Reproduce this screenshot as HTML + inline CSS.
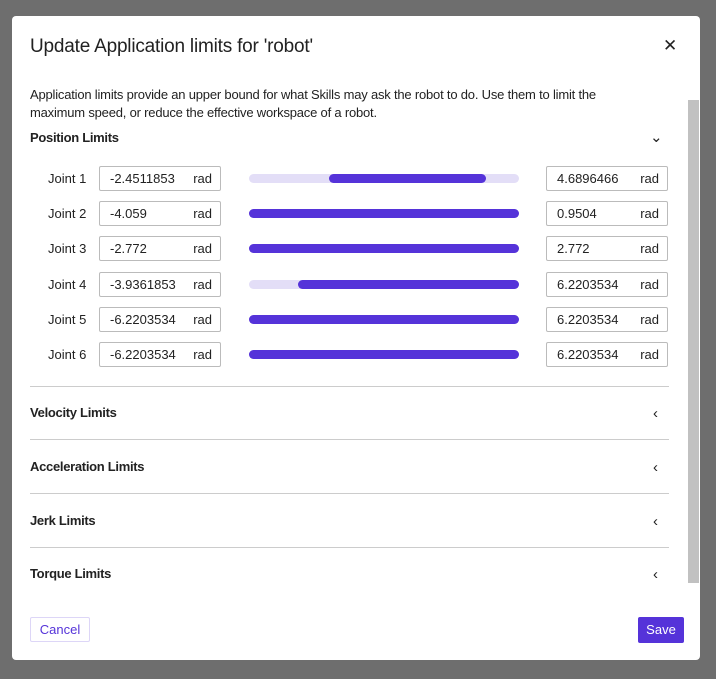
<!DOCTYPE html>
<html><head><style>
*{box-sizing:border-box;margin:0;padding:0}
body{width:716px;height:679px;background:#6e6e6e;font-family:"Liberation Sans",sans-serif;position:relative;overflow:hidden}
.modal{position:absolute;left:12px;top:16px;width:688px;height:644px;background:#fff;border-radius:4px}
.abs{position:absolute}
.title{left:18px;top:20px;font-size:19px;color:#222;letter-spacing:-0.2px}
.x{left:651px;top:20px;font-size:17px;color:#222}
.desc{left:18px;top:70px;font-size:13px;line-height:18px;color:#222;width:600px;letter-spacing:-0.2px}
.h{font-size:13px;font-weight:bold;color:#222;left:18px;letter-spacing:-0.3px}
.chev{left:641px;font-size:15px;color:#222}
.lbl{left:36px;font-size:13px;color:#222}
.inp{width:122px;height:25px;border:1px solid #bbb;border-radius:2px;font-size:13px;color:#222;padding:4px 0 0 10px}
.inp span{position:absolute;right:8px;top:4px}
.track{left:237px;width:270px;height:9px;border-radius:5px;background:#e3def7}
.fill{position:absolute;top:0;height:9px;border-radius:5px;background:#5533d9}
.div{left:18px;width:639px;height:1px;background:#ccc}
.sb{left:676px;top:84px;width:11px;height:483px;background:#c1c1c1}
</style></head><body>
<div class="modal">
<div class="abs title">Update Application limits for 'robot'</div>
<div class="abs x">✕</div>
<div class="abs desc">Application limits provide an upper bound for what Skills may ask the robot to do. Use them to limit the maximum speed, or reduce the effective workspace of a robot.</div>
<div class="abs h" style="top:114px">Position Limits</div>
<div class="abs chev" style="top:112px;left:638px">⌄</div>

<div class="abs lbl" style="top:155px">Joint 1</div>
<div class="abs inp" style="left:87px;top:150px">-2.4511853<span>rad</span></div>
<div class="abs track" style="top:158px"><div class="fill" style="left:80px;width:157px"></div></div>
<div class="abs inp" style="left:534px;top:150px">4.6896466<span>rad</span></div>

<div class="abs lbl" style="top:190px">Joint 2</div>
<div class="abs inp" style="left:87px;top:185px">-4.059<span>rad</span></div>
<div class="abs track" style="top:193px"><div class="fill" style="left:0;width:270px"></div></div>
<div class="abs inp" style="left:534px;top:185px">0.9504<span>rad</span></div>

<div class="abs lbl" style="top:225px">Joint 3</div>
<div class="abs inp" style="left:87px;top:220px">-2.772<span>rad</span></div>
<div class="abs track" style="top:228px"><div class="fill" style="left:0;width:270px"></div></div>
<div class="abs inp" style="left:534px;top:220px">2.772<span>rad</span></div>

<div class="abs lbl" style="top:261px">Joint 4</div>
<div class="abs inp" style="left:87px;top:256px">-3.9361853<span>rad</span></div>
<div class="abs track" style="top:264px"><div class="fill" style="left:49px;width:221px"></div></div>
<div class="abs inp" style="left:534px;top:256px">6.2203534<span>rad</span></div>

<div class="abs lbl" style="top:296px">Joint 5</div>
<div class="abs inp" style="left:87px;top:291px">-6.2203534<span>rad</span></div>
<div class="abs track" style="top:299px"><div class="fill" style="left:0;width:270px"></div></div>
<div class="abs inp" style="left:534px;top:291px">6.2203534<span>rad</span></div>

<div class="abs lbl" style="top:331px">Joint 6</div>
<div class="abs inp" style="left:87px;top:326px">-6.2203534<span>rad</span></div>
<div class="abs track" style="top:334px"><div class="fill" style="left:0;width:270px"></div></div>
<div class="abs inp" style="left:534px;top:326px">6.2203534<span>rad</span></div>

<div class="abs div" style="top:370px"></div>
<div class="abs h" style="top:389px">Velocity Limits</div><div class="abs chev" style="top:389px">‹</div>
<div class="abs div" style="top:423px"></div>
<div class="abs h" style="top:443px">Acceleration Limits</div><div class="abs chev" style="top:443px">‹</div>
<div class="abs div" style="top:477px"></div>
<div class="abs h" style="top:497px">Jerk Limits</div><div class="abs chev" style="top:497px">‹</div>
<div class="abs div" style="top:531px"></div>
<div class="abs h" style="top:550px">Torque Limits</div><div class="abs chev" style="top:550px">‹</div>

<div class="abs sb"></div>

<div class="abs" style="left:18px;top:601px;width:60px;height:25px;border:1px solid #ddd6f7;border-radius:2px;color:#5533d9;font-size:13px;text-align:center;line-height:23px">Cancel</div>
<div class="abs" style="left:626px;top:601px;width:46px;height:26px;background:#5533d9;border-radius:2px;color:#fff;font-size:13px;text-align:center;line-height:26px">Save</div>
</div>
</body></html>
